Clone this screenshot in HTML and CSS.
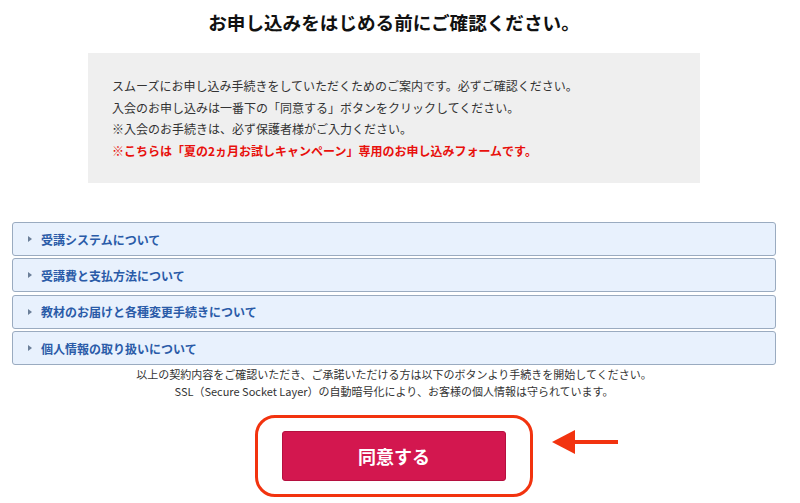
FILE: index.html
```html
<!DOCTYPE html>
<html lang="ja">
<head>
<meta charset="utf-8">
<title>お申し込みをはじめる前にご確認ください。</title>
<link rel="stylesheet" href="styles.css">
</head>
<body>
<div class="page">
  <h1 class="title">お申し込みをはじめる前にご確認ください。</h1>
  <div class="notice">
    <p>スムーズにお申し込み手続きをしていただくためのご案内です。必ずご確認ください。</p>
    <p>入会のお申し込みは一番下の「同意する」ボタンをクリックしてください。</p>
    <p>※入会のお手続きは、必ず保護者様がご入力ください。</p>
    <p class="alert">※こちらは「夏の2ヵ月お試しキャンペーン」専用のお申し込みフォームです。</p>
  </div>
  <ul class="accordion">
    <li class="acc-item"><span class="tri"></span>受講システムについて</li>
    <li class="acc-item"><span class="tri"></span>受講費と支払方法について</li>
    <li class="acc-item"><span class="tri"></span>教材のお届けと各種変更手続きについて</li>
    <li class="acc-item"><span class="tri"></span>個人情報の取り扱いについて</li>
  </ul>
  <div class="note">
    <p>以上の契約内容をご確認いただき、ご承諾いただける方は以下のボタンより手続きを開始してください。</p>
    <p>SSL（Secure Socket Layer）の自動暗号化により、お客様の個人情報は守られています。</p>
  </div>
  <div class="agree-row">
    <div class="highlight">
      <button class="agree" type="button">同意する</button>
    </div>
    <svg class="arrow" width="66" height="26" viewBox="0 0 66 26">
      <polygon points="0,13 23,1 23,25" fill="#f2330f"/>
      <rect x="20" y="11" width="46" height="4" fill="#f2330f"/>
    </svg>
  </div>
</div>
</body>
</html>
```
FILE: styles.css
```css
* { box-sizing: border-box; }
body {
  margin: 0;
  background: #ffffff;
  font-family: "Noto Sans CJK JP", "Noto Sans", sans-serif;
  color: #333333;
}
p { margin: 0; }
.page {
  width: 764px;
  margin-left: 12px;
}
.title {
  margin: 0;
  padding-top: 10px;
  font-size: 18.6px;
  line-height: 24px;
  font-weight: bold;
  color: #111111;
  text-align: center;
}
.notice {
  width: 612px;
  margin: 19px auto 0;
  background: #efefef;
  padding: 22px 24px 22px 24px;
  font-size: 12px;
  line-height: 21.5px;
  color: #333333;
}
.notice .alert {
  color: #e8100c;
  font-weight: bold;
}
.accordion {
  list-style: none;
  margin: 39px 0 0;
  padding: 0;
  display: flex;
  flex-direction: column;
  gap: 2.4px;
}
.acc-item {
  height: 34px;
  display: flex;
  align-items: center;
  padding-left: 15px;
  background: #e8f1fd;
  border: 1px solid #9aabc0;
  border-radius: 3px;
  font-size: 12px;
  font-weight: bold;
  color: #2a5ba8;
}
.tri {
  width: 0;
  height: 0;
  border-top: 3px solid transparent;
  border-bottom: 3px solid transparent;
  border-left: 4px solid #6b7f99;
  margin-right: 9px;
}
.note {
  margin-top: 1px;
  font-size: 11px;
  line-height: 17px;
  text-align: center;
  color: #333333;
}
.agree-row {
  position: relative;
  display: flex;
  justify-content: center;
  margin-top: 15px;
}
.highlight {
  width: 278px;
  height: 82px;
  border: 3px solid #f2330f;
  border-radius: 20px;
  display: flex;
  align-items: center;
  justify-content: center;
}
.agree {
  width: 224px;
  height: 50px;
  border: 1px solid #b5103f;
  border-radius: 3px;
  background: #d3174f;
  color: #ffffff;
  font-family: "Noto Sans CJK JP", "Noto Sans", sans-serif;
  font-size: 18px;
  font-weight: bold;
  padding: 0;
}
.arrow {
  position: absolute;
  left: 540px;
  top: 14px;
}
```
